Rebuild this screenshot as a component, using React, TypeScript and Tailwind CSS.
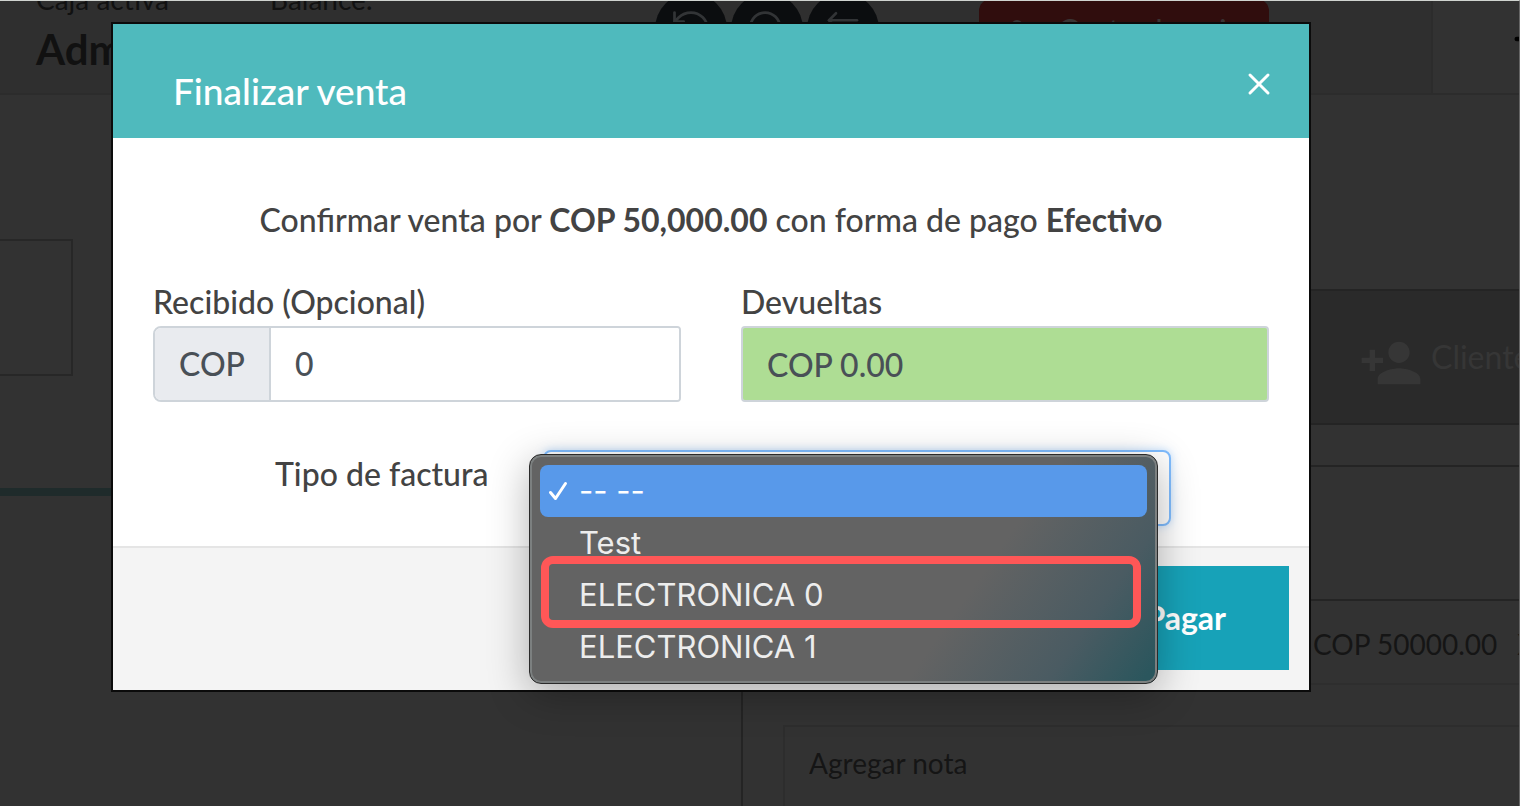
import type { ReactNode } from "react";
import { ArrowLeftRight, Lock, Minus, RotateCcw, Search, X } from "lucide-react";
import { MdPersonAdd } from "react-icons/md";

const invoiceTypes = ["-- --", "Test", "ELECTRONICA 0", "ELECTRONICA 1"];
const selectedType = 0;
const markedType = 2;

function RoundButton({ label, children }: { label: string; children: ReactNode }) {
  return (
    <button
      type="button"
      aria-label={label}
      className="flex size-18 items-center justify-center rounded-full bg-[#0b0d0f] text-[#323436]"
    >
      {children}
    </button>
  );
}

function TopBar() {
  return (
    <header className="flex h-[94px] overflow-hidden border-b-2 border-[#2c2c2c] bg-[#2f2f2f] text-[#111]">
      <div className="flex flex-1 items-start pl-9">
        <div className="-mt-5 w-[234px]">
          <p className="text-[28px] leading-9">Caja activa</p>
          <p className="mt-2 text-[42px] leading-12 font-bold">Admin</p>
        </div>
        <p className="-mt-5 text-[28px] leading-9">Balance:</p>
        <div className="-mt-2 mr-[100px] ml-auto flex gap-1">
          <RoundButton label="Recargar">
            <RotateCcw size={44} strokeWidth={1.5} />
          </RoundButton>
          <RoundButton label="Buscar">
            <Search size={44} strokeWidth={1.5} />
          </RoundButton>
          <RoundButton label="Mover">
            <ArrowLeftRight size={42} strokeWidth={1.5} />
          </RoundButton>
        </div>
        <button
          type="button"
          className="-mt-0.5 mr-[162px] flex h-16 w-[290px] items-center justify-center gap-7 rounded-xl bg-[#300d0d] text-[32px] text-[#3a3434]"
        >
          <Lock size={24} />
          Corte de caja
        </button>
      </div>
      <div className="flex w-[88px] items-start justify-end overflow-hidden border-l-2 border-[#2c2c2c] bg-[#323232] pt-6">
        <Minus size={28} strokeWidth={4} className="-mr-5 shrink-0 text-black" />
      </div>
    </header>
  );
}

function SalePage() {
  return (
    <div className="flex min-h-screen flex-col border-t border-r border-t-[#d0d4d0] border-r-[#666]">
      <TopBar />
      <main className="flex flex-1">
        <section className="w-[741px] shrink-0 pt-36">
          <div className="h-[137px] w-[73px] border-2 border-l-0 border-[#272727]" />
          <div className="mt-28 h-2 bg-[#1f2b2b]" />
        </section>
        <section className="flex min-w-0 flex-1 flex-col overflow-hidden border-l-2 border-[#242424] pt-[194px] whitespace-nowrap">
          <button
            type="button"
            className="flex h-[136px] items-center overflow-hidden border-y-2 border-[#242424] bg-[#2a2a2a] pl-[616px] text-[32px] text-[#363636]"
          >
            <MdPersonAdd size={64} className="mt-3 shrink-0" />
            <span className="ml-2">Cliente</span>
          </button>
          <div className="mt-10 h-[134px] border-t-2 border-[#242424]" />
          <div className="flex h-[86px] items-center gap-5 border-t-2 border-b-2 border-t-[#242424] border-b-[#2e2e2e] pt-1 pl-[570px] text-[28px] text-[#151515]">
            <span>COP 50000.00</span>
            <span>X</span>
          </div>
          <div className="mt-10 ml-10 flex-1 border-t-2 border-l-2 border-[#2d2d2d]">
            <input
              type="text"
              aria-label="Agregar nota"
              placeholder="Agregar nota"
              className="h-[72px] w-full bg-transparent px-6 text-[28px] outline-none placeholder:text-[#151515]"
            />
          </div>
        </section>
      </main>
    </div>
  );
}

function CheckMark() {
  return (
    <svg
      viewBox="0 0 20 20"
      className="absolute left-2 size-5"
      fill="none"
      stroke="currentColor"
      strokeWidth="3"
      strokeLinecap="round"
      strokeLinejoin="round"
      aria-hidden="true"
    >
      <path d="M2.5 11.5 7.5 17.5 17.5 2.5" />
    </svg>
  );
}

function InvoiceMenu() {
  return (
    <ul
      role="listbox"
      aria-label="Tipo de factura"
      className="absolute top-1 right-[13px] -left-[14px] rounded-xl border border-[#2a2a2a] bg-[linear-gradient(125deg,#636363_68%,#4a5b62_86%,#2b565d_98%)] p-[10px] font-[Inter,sans-serif] text-[31px] font-normal text-[#ededed] shadow-[inset_0_0_0_2px_#7c8080,0_10px_40px_rgba(0,0,0,0.3)]"
    >
      {invoiceTypes.map((type, i) => (
        <li
          key={type}
          role="option"
          aria-selected={i === selectedType}
          className={
            i === selectedType
              ? "relative flex h-13 items-center rounded-lg bg-[#5899ea] pl-[39px] text-white"
              : "relative flex h-13 items-center pl-[39px]"
          }
        >
          {i === selectedType && <CheckMark />}
          {type}
          {i === markedType && (
            <span className="absolute -top-[13px] right-[6px] -bottom-[7px] left-px rounded-xl border-8 border-[#ff5757]" />
          )}
        </li>
      ))}
    </ul>
  );
}

function CheckoutDialog() {
  return (
    <div
      role="dialog"
      aria-labelledby="dialog-title"
      className="border-2 border-[#0b0b0b] bg-white text-[32px] font-medium text-[#434343]"
    >
      <div className="flex h-[114px] items-center justify-between bg-[#4fbabd] pr-8 pl-[60px] text-white">
        <h2 id="dialog-title" className="mt-5 text-[37px]">
          Finalizar venta
        </h2>
        <button type="button" aria-label="Cerrar" className="mt-1.5">
          <X size={36} strokeWidth={2} />
        </button>
      </div>

      <div className="px-10 pt-[58px] pb-5">
        <p className="text-center leading-12">
          Confirmar venta por <b>COP 50,000.00</b> con forma de pago <b>Efectivo</b>
        </p>

        <div className="mt-[34px] grid grid-cols-2 gap-15">
          <div>
            <label htmlFor="received" className="block leading-12">
              Recibido (Opcional)
            </label>
            <div className="flex h-19 overflow-hidden rounded-l-lg rounded-r-sm border-2 border-[#ced4da] text-[#495057]">
              <span className="flex items-center border-r-2 border-[#ced4da] bg-[#e9ebef] px-6">
                COP
              </span>
              <input
                id="received"
                type="text"
                defaultValue="0"
                className="min-w-0 flex-1 bg-white px-6 outline-none"
              />
            </div>
          </div>
          <div>
            <label htmlFor="change" className="block leading-12">
              Devueltas
            </label>
            <input
              id="change"
              type="text"
              readOnly
              value="COP 0.00"
              className="block h-19 w-full rounded-sm border-2 border-[#ced4da] bg-[#aedd94] px-6 text-[#495057] outline-none"
            />
          </div>
        </div>

        <div className="mt-12 flex items-start pr-[98px] pl-[122px]">
          <label htmlFor="invoice-type" className="w-[268px] leading-12">
            Tipo de factura
          </label>
          <div className="relative z-10 flex-1">
            <select
              id="invoice-type"
              className="block h-19 w-full appearance-none rounded-lg border-2 border-[#80bdff] bg-white px-6 shadow-[0_0_8px_rgba(128,189,255,0.5)]"
            >
              {invoiceTypes.map((type) => (
                <option key={type}>{type}</option>
              ))}
            </select>
            <InvoiceMenu />
          </div>
        </div>
      </div>

      <div className="flex justify-end border-t-2 border-[#e5e5e5] bg-[#f4f4f4] px-5 pt-[18px] pb-5">
        <button type="button" className="h-[104px] bg-[#17a2b8] px-[63px] font-bold text-white">
          Pagar
        </button>
      </div>
    </div>
  );
}

export default function App() {
  return (
    <div className="relative min-h-screen overflow-hidden bg-[#323232] font-[Lato,sans-serif]">
      <SalePage />
      <div className="absolute inset-0 pt-[22px] pr-[209px] pl-[111px]">
        <CheckoutDialog />
      </div>
    </div>
  );
}
